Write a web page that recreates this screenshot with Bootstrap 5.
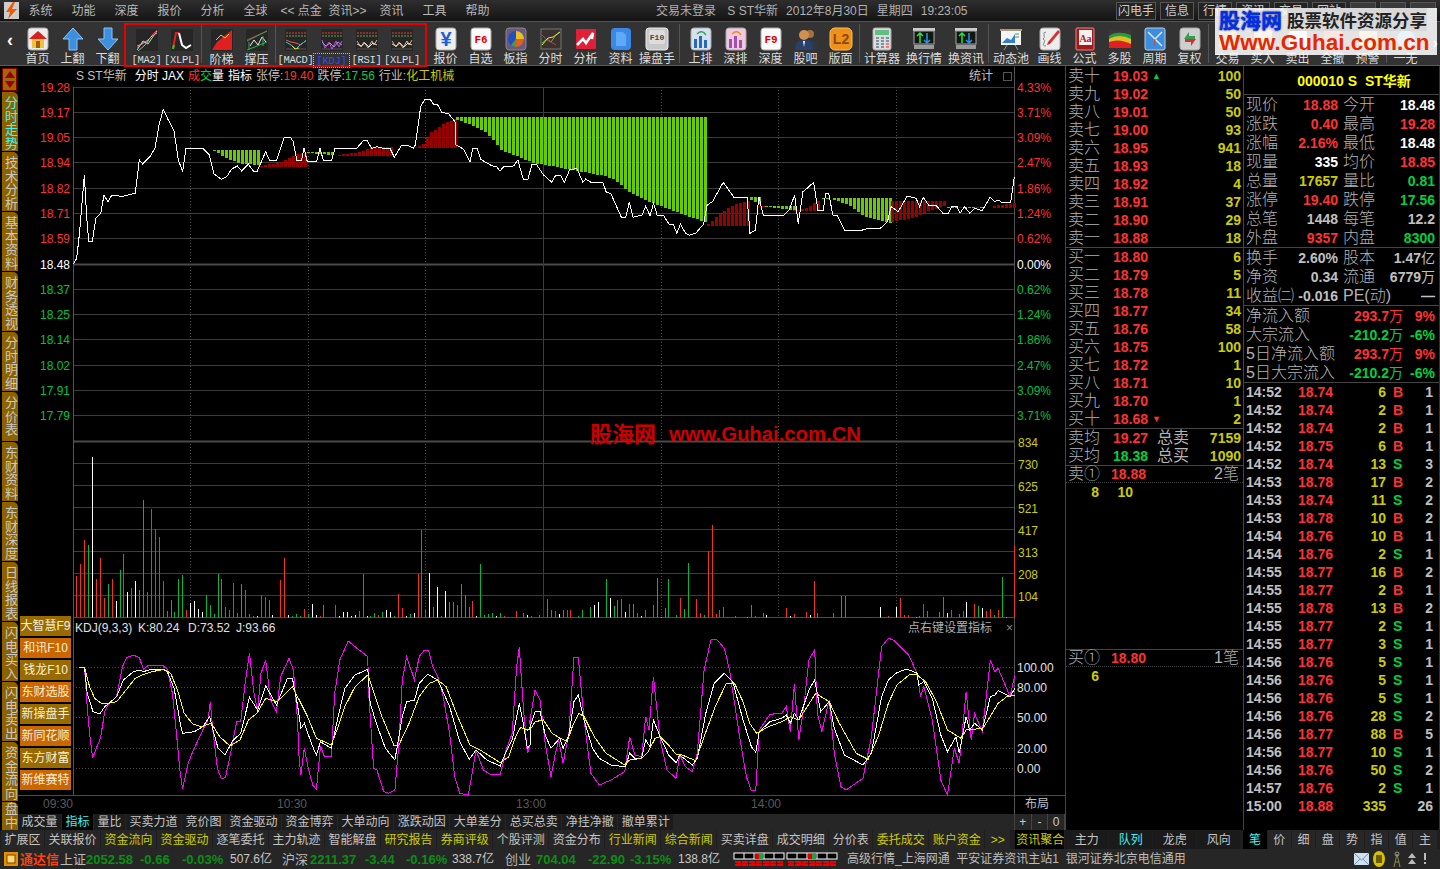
<!doctype html>
<html lang="zh">
<head>
<meta charset="utf-8">
<title>通达信</title>
<link href="https://cdn.jsdelivr.net/npm/bootstrap@5.3.0/dist/css/bootstrap.min.css" rel="stylesheet">
<style>
html,body{height:100%;margin:0;background:#000;overflow:hidden}
body{font-family:"Liberation Sans","Noto Sans CJK SC",sans-serif;font-size:12px;color:#c0c0c0;line-height:1}
.tdx-app{width:1440px;height:869px;position:relative;overflow:hidden}
.c-r{color:#ff3232}.c-g{color:#00d040}.c-y{color:#cccc00}.c-w{color:#fff}.c-c{color:#3cf5f5}.c-s{color:#c0c0c0}
.top-bar{height:21px;background:linear-gradient(#2e2e2e,#141414);color:#b8b8b8}
.top-logo{width:19px}
.top-menu{width:43px;text-align:center;flex:none}
.top-wide{width:93px}
.top-info{width:460px;margin-left:auto;flex:none;color:#b0b0b0;font-size:12px}
.top-btn{height:18px;border:1px solid #555;background:#222;color:#ccc;flex:none;margin-right:4px;width:34px;text-align:center;line-height:16px}
.top-btn.wide{width:40px}
.top-btn.win{width:26px;background:#3a3a3a}
.tool-bar{height:45px;background:#333;border-top:1px solid #555;border-bottom:1px solid #5c5c5c;padding-top:5px}
.tb-back{width:20px;color:#fff;font-size:18px;font-weight:700;text-align:center;line-height:26px;flex:none}
.tb-item{width:35px;flex:none;text-align:center;color:#ddd;white-space:nowrap}
.tb-item svg{display:block;margin:0 auto 2px;width:24px;height:24px}
.tb-item.w37{width:37px}.tb-item.w38{width:38px}.tb-item.w42{width:42px}
.tb-lab{display:block;height:13px;line-height:13px}
.tb-mono{font-family:"Liberation Mono",monospace;font-size:10.5px;color:#ddd;letter-spacing:-.3px}
.tb-blue{color:#3348ff;outline:1px dotted #bbb;padding:1px 0}
.tb-sep{width:1px;flex:none;background:#555;align-self:stretch;margin:-3px 2px 2px 2px}
.tb-sep.nar{margin:-3px 1px 2px 1px}
.tb-sep.wid{margin:-3px 3px 2px 3px}
.tb-red{border:2px solid #e60000;margin:-4px 1px 0 -1px;height:44px;padding:3px 0 0 3px;flex:none;width:303px}
.main-row{height:764px}
.side-col{width:18px;flex:none;padding-left:2px;padding-top:2px}
.side-arrow{width:15px;height:24px;background:#a06800;border:1px solid #8a0000;display:flex;flex-direction:column;align-items:center;justify-content:center;gap:3px}
.tri-u{width:0;height:0;border:5px solid transparent;border-top:0;border-bottom:7px solid #9a0000}
.tri-d{width:0;height:0;border:5px solid transparent;border-bottom:0;border-top:7px solid #9a0000}
.side-tab{width:16px;background:#8c6200;color:#c8c8c8;margin-top:1px;writing-mode:vertical-rl;text-orientation:upright;font-size:13px;letter-spacing:.5px;line-height:16px;padding-top:4px;overflow:hidden;border-top-right-radius:5px;flex:none}
.side-tab.on{color:#3cf5f5}
.h59{height:59px}.h49{height:49px}.h28{height:28px;padding-top:0}
.chart-col{width:1047px;flex:none;position:relative}
.chart-head{height:20px;padding:4px 0 0 58px;font-size:12px;white-space:nowrap}
.chart-head span{margin-right:4px}
.chart-head .first{margin-right:8px}
.chart-head .tight{margin-right:0}
.chart-head .lbl{margin-right:0}
.stat-box{display:inline-block;width:9px;height:9px;border:1px solid #555;margin:0 53px 0 10px;vertical-align:-1px}
.chart-svg{display:block;overflow:visible}
.chart-svg text{font-family:"Liberation Sans","Noto Sans CJK SC",sans-serif;font-size:12px}
.brand-stack{position:absolute;left:2px;top:550px;width:51px;display:flex;flex-direction:column;gap:2px}
.brand-btn{height:20px;background:#996a00;color:#f4f0d8;font-size:12px;text-align:center;line-height:21px;white-space:nowrap;overflow:hidden}
.brand-btn.alt{background:#cc6600}
.tabs-one{height:16px;background:#262626}
.tab-cell{padding:0 3.5px;height:16px;line-height:17px;background:#1c1c1c;color:#c4c4c4;margin-right:1px;flex:none;white-space:nowrap}
.tab-cell.act{background:#000;color:#3cf5f5}
.plus-box{margin-left:auto;display:flex;border-left:1px solid #444;width:51px}
.plus-box span{flex:1;text-align:center;line-height:16px;border-right:1px solid #444;color:#ccc}
.ob-col{width:178px;flex:none;border-left:1px solid #444;background:#000;padding-top:1px}
.ob-row{height:18px;padding-left:2px}
.ob-lab{width:45px;font-size:16px;color:#b4b4b4;flex:none;font-weight:300}
.ob-pr{font-weight:700;font-size:14px;flex:none;width:39px}
.ob-arrow{font-size:9px;width:12px;flex:none}
.ob-qty{font-weight:700;font-size:14px;color:#cccc00;margin-left:auto;padding-right:2px}
.line-h{height:1px;background:#444;flex:none}
.ob-lab2{font-size:16px;color:#b4b4b4;width:42px;flex:none;margin-left:5px}
.q-head{height:17px;border-bottom:1px dotted #444;padding-left:2px}
.q-head .ob-lab{width:43px}
.q-head .ob-pr{width:42px}
.q-nums{height:16px;padding-top:2px;font-weight:700;font-size:14px;color:#cccc00}
.q-gap{height:150px}
.q-a{width:33px;text-align:right;flex:none}
.q-b{width:34px;text-align:right;flex:none}
.if-col{width:197px;flex:none;border-left:1px solid #444;background:#000;border-right:1px solid #333;padding-top:1px}
.if-head{height:27px;line-height:29px;color:#ff0;font-weight:700;font-size:14px;text-align:center;padding-left:25px;white-space:nowrap}
.if-row{display:grid;grid-template-columns:34px 58px 5px 34px 58px;height:19px;padding-left:2px;align-items:center;white-space:nowrap}
.if-l{font-size:16px;color:#b4b4b4;font-weight:300}
.if-v{text-align:right;font-weight:700;font-size:14px}
.fl-row{display:grid;grid-template-columns:98px 59px 32px;height:19px;padding-left:2px;align-items:center;white-space:nowrap}
.fl-u{font-weight:400;font-size:14px}
.tick-row{display:grid;grid-template-columns:52px 36px 52px 7px 12px 28px;height:18px;padding-left:2px;align-items:center;font-weight:700;font-size:14px;white-space:nowrap}
.tick-n{text-align:right}
.tabs-two{height:19px;background:#1e1e1e;padding-left:1px}
.tabs-two .tab-cell{height:19px;line-height:20px;background:#262626}
.tabs-two .tab-cell.c-y{color:#cccc00}
.tabs-two .tab-cell.c-c{color:#3cf5f5}
.tabs-two .mk{width:25px;text-align:center;color:#cccc00;padding:0;background:#262626}
.tabs-two .blk{background:#000;color:#cccc00;width:49px;padding:0 0 0 1px;margin-left:4px}
.tabs-two .r4{width:43px;text-align:center;padding:0;background:#1a1a1a}
.tabs-two .r8{width:23.3px;text-align:center;padding:0;background:#262626}
.tabs-two .r8.act{background:#000}
.r-gap{width:2px;flex:none}
.status-bar{height:20px;background:#262626;display:grid;grid-template-columns:20px 40px 26px 54px 42px 48px 52px 28px 55px 41px 46px 53px 31px 52px 42px 48px 52px 112px 1fr 90px;align-items:center;white-space:nowrap}
.st-g{color:#0a8f14;font-weight:700;font-size:13px}
.st-n{color:#c8c8c8;font-size:12px}
.st-l{color:#bbb;font-size:13px}
.st-brand{color:#ff4010;font-weight:700;font-size:13px}
.st-msg{color:#bdbdbd;font-size:12px;padding-left:5px}
.logo-over{position:absolute;left:1215px;top:8px;width:222px;height:47px;background:rgba(255,255,255,.87);padding:0 2px 0 4px;overflow:hidden}
.logo-a{color:#0030e8;font-weight:700;font-size:21px;line-height:23px;font-family:"Noto Sans CJK SC",sans-serif;text-shadow:0 0 2px #000060}
.logo-b{color:#222;font-weight:700;font-size:17.5px;margin-left:5px;line-height:23px;font-family:"Noto Sans CJK SC",sans-serif;white-space:nowrap;background:#d8d8d8}
.logo-c{color:#e62800;font-weight:700;font-size:22.5px;line-height:24px;white-space:nowrap}
.next-arrow{position:absolute;left:1433px;top:36px;color:#fff;font-size:14px;font-weight:700}
</style>
</head>
<body>
<div class="tdx-app d-flex flex-column">
  <div class="top-bar d-flex align-items-center">
    <div class="top-logo ps-1 flex-none"><svg width="15" height="17" viewBox="0 0 15 17"><rect width="15" height="17" fill="#ccc"/><path d="M9 0 2 10h4l-2 7 9-10H8l3-7z" fill="#f05a00"/></svg></div>
    <span class="top-menu">系统</span><span class="top-menu">功能</span><span class="top-menu">深度</span><span class="top-menu">报价</span><span class="top-menu">分析</span><span class="top-menu">全球</span>
    <span class="top-menu top-wide">&lt;&lt; 点金&nbsp;&nbsp;资讯&gt;&gt;</span>
    <span class="top-menu">资讯</span><span class="top-menu">工具</span><span class="top-menu">帮助</span>
    <div class="top-info d-flex gap-2 justify-content-start"><span>交易未登录</span><span>&nbsp;S ST华新</span><span>2012年8月30日</span><span>星期四</span><span>19:23:05</span></div>
    <div class="d-flex flex-none" id="topBtns"><span class="top-btn wide">闪电手</span><span class="top-btn">信息</span><span class="top-btn">行情</span><span class="top-btn">资讯</span><span class="top-btn">交易</span><span class="top-btn">网站</span><span class="top-btn win"></span><span class="top-btn win"></span><span class="top-btn win"></span></div>
  </div>
  <div class="tool-bar d-flex" id="toolBar"></div>
  <div class="main-row d-flex">
    <div class="side-col d-flex flex-column" id="sideCol"></div>
    <div class="chart-col d-flex flex-column">
      <div class="chart-head d-flex">
        <span class="first c-s">S ST华新</span><span class="c-w">分时 JAX</span><span class="tight c-r">成</span><span class="tight c-g">交</span><span class="c-w">量</span><span class="c-w">指标</span>
        <span class="lbl c-s">张停:</span><span class="c-r">19.40</span><span class="lbl c-s">跌停:</span><span class="c-g">17.56</span><span class="lbl c-s">行业:</span><span class="c-y">化工机械</span>
        <span class="ms-auto tight c-s">统计<i class="stat-box"></i></span>
      </div>
      <svg class="chart-svg" id="chart" width="1047" height="728" viewBox="18 86 1047 728"></svg>
      <div class="brand-stack" id="brands"></div>
      <div class="tabs-one d-flex" id="tabsOne"></div>
    </div>
    <div class="ob-col d-flex flex-column" id="obCol"></div>
    <div class="if-col d-flex flex-column" id="ifCol"></div>
  </div>
  <div class="tabs-two d-flex" id="tabsTwo"></div>
  <div class="status-bar">
    <svg width="14" height="14" viewBox="0 0 14 14" class="ms-1"><rect width="14" height="14" fill="#e09000"/><rect x="3" y="3" width="8" height="8" fill="#f8d878" stroke="#804000"/></svg>
    <span class="st-brand">通达信</span><span class="st-l">上证</span><span class="st-g">2052.58</span><span class="st-g">-0.66</span><span class="st-g">-0.03%</span><span class="st-n">507.6亿</span>
    <span class="st-l">沪深</span><span class="st-g">2211.37</span><span class="st-g">-3.44</span><span class="st-g">-0.16%</span><span class="st-n">338.7亿</span>
    <span class="st-l">创业</span><span class="st-g">704.04</span><span class="st-g">-22.90</span><span class="st-g">-3.15%</span><span class="st-n">138.8亿</span>
    <svg width="112" height="18" viewBox="0 0 112 18" id="meter"></svg>
    <span class="st-msg">高级行情_上海网通&nbsp;&nbsp;平安证券资讯主站1&nbsp;&nbsp;银河证券北京电信通用</span>
    <svg width="90" height="18" viewBox="0 0 90 18">
      <rect x="4" y="3" width="15" height="12" fill="#cfe0f0"/><path d="M4 3l7.500 7L19 3M4 15l6-6M19 15l-6-6" stroke="#7a8ea8" fill="none"/>
      <ellipse cx="29" cy="9" rx="6" ry="8" fill="#d8c000"/><rect x="26" y="5" width="6" height="8" fill="#6a5a00"/>
      <path d="M44 17l3-13 3 13M45 12h4" stroke="#8a8a50" fill="none"/><circle cx="47" cy="4" r="2" fill="none" stroke="#999"/>
      <path d="M62 3l4 5h-8zM62 9l4 5h-8z" fill="#bbb"/><rect x="74" y="3" width="2" height="7" fill="#bbb"/><rect x="74" y="12" width="2" height="2" fill="#bbb"/>
    </svg>
  </div>
  <div class="logo-over">
    <div class="d-flex align-items-center"><span class="logo-a">股海网</span><span class="logo-b">股票软件资源分享</span></div>
    <div class="logo-c">Www.Guhai.com.cn</div>
  </div>
  <div class="next-arrow">&rsaquo;</div>
</div>
<script src="https://cdn.jsdelivr.net/npm/bootstrap@5.3.0/dist/js/bootstrap.bundle.min.js"></script>
<script>
(function(){
/* ---------- icons ---------- */
function tile(c,s){return '<rect x="2" y="1" width="20" height="22" rx="3" fill="'+c+'" stroke="'+(s||'#aaa')+'"/>';}
function dark(){return '<rect x="1" y="1" width="22" height="22" fill="#262626"/>';}
function dots(){return '<path d="M2 5h20" stroke="#d84030" stroke-dasharray="2 1"/><path d="M2 8h20" stroke="#70a040" stroke-dasharray="2 1"/><path d="M2 21h20" stroke="#555"/>';}
function t(x,y,s,c,txt,f){return '<text x="'+x+'" y="'+y+'" font-size="'+s+'" fill="'+c+'" font-weight="700" text-anchor="middle" font-family="'+(f||'Liberation Mono')+'">'+txt+'</text>';}
var I={
home:tile('#ececec')+'<path d="M12 4l9 8H3z" fill="#d82020"/><rect x="6" y="12" width="12" height="9" fill="#f0c040"/><rect x="10" y="14" width="4" height="7" fill="#a06000"/>',
up:'<path d="M12 1l10 11h-6v11H8V12H2z" fill="#3d8fe0" stroke="#8cc4f4"/>',
dn:'<path d="M12 23L2 12h6V1h8v11h6z" fill="#3d8fe0" stroke="#8cc4f4"/>',
ma:dark()+'<path d="M2 20l6-6 4 1 5-8 5-5" stroke="#e04040" fill="none"/><path d="M2 22l6-9 5 3 4-6 5-7" stroke="#8f8" fill="none"/><path d="M2 18l5-2 6-4 4-4 5-3" stroke="#c8a0d0" fill="none"/><path d="M3 23l6-5 5-6" stroke="#aaa" fill="none"/>',
xl:dark()+'<path d="M3 20L6 5l3 0" stroke="#e02020" stroke-width="2" fill="none"/><path d="M9 5l3 12 4 3 5-3" stroke="#fff" stroke-width="2" fill="none"/><path d="M3 21l1-4" stroke="#2c2" stroke-width="2"/>',
stair:dark()+'<path d="M2 22l5-8 6-5 9-7v20z" fill="#e02020"/><path d="M6 12l5-5 4 3 4-4" stroke="#eed040" fill="none"/>',
press:dark()+'<path d="M2 12l20-9" stroke="#d03030"/><path d="M2 22l20-8" stroke="#20c040"/><path d="M5 18l4-6 4 5 4-8 4 5" stroke="#eee" fill="none"/><path d="M2 13L22 3M4 22v-8M18 18V8" stroke="#40a060" fill="none"/>',
macd:dark()+dots()+'<path d="M2 14l5 3 5 4 5-5 5-3" stroke="#30d0d0" fill="none"/><path d="M2 12l5 2 5 1 5 2 5-5" stroke="#e06060" fill="none"/><path d="M8 18l3 3 4-1" stroke="#d0d040" fill="none"/>',
kdj:dark()+dots()+'<path d="M2 12l3 8 4-6 3 7 4-8 3 6 3-6" stroke="#e040e0" fill="none"/><path d="M2 14l4 4 4-3 4 4 4-5 4 3" stroke="#90a0e0" fill="none"/>',
rsi:dark()+dots()+'<path d="M2 13l4 6 3-5 4 6 4-7 2 4 3-5" stroke="#d8b080" fill="none"/><path d="M2 16l4 2 4-3 4 4 4-4 4 2" stroke="#e0e0e0" fill="none"/>',
yen:tile('#eee')+t(12,19,20,'#2060d0','¥','Liberation Sans'),
f6:tile('#fafafa')+t(12,16,11,'#e00000','F6'),
pie:tile('#6a5a80','#888')+'<circle cx="12" cy="12" r="8" fill="#2050c0"/><path d="M12 12V4a8 8 0 0 1 8 8z" fill="#e8c020"/><path d="M12 12h8a8 8 0 0 1-8 8z" fill="#e06020"/><path d="M12 12v8a8 8 0 0 1-5-2z" fill="#40a040"/>',
fen:'<rect x="2" y="2" width="20" height="20" fill="#3a3030" stroke="#777"/><path d="M3 16l5-4 4 3 5-7 4-3" stroke="#30d040" fill="none"/><path d="M3 8l5 5 4 2 5 3" stroke="#e03030" fill="none"/><path d="M3 18l6-7 5-1 7-5" stroke="#e8e040" fill="none"/>',
ana:'<rect x="2" y="2" width="20" height="20" rx="1" fill="#e02038"/><path d="M3 18l6-6 3 4 7-10-1 6" stroke="#fff" stroke-width="2.500" fill="none"/>',
doc:'<rect x="2" y="1" width="20" height="22" rx="4" fill="#3a88e8"/><path d="M7 5h7l3 3v11H7z" fill="#60a8f8"/>',
f10:'<rect x="1" y="1" width="22" height="22" rx="3" fill="#c8c8c8" stroke="#eee"/><rect x="4" y="3" width="16" height="14" rx="2" fill="#ddd"/>'+t(12,13,8,'#444','F10'),
bup:tile('#d4e2f0')+'<path d="M5 21V12h3v9zM10 21V9h3v12zM15 21V13h3v8z" fill="#2868b8"/><path d="M8 7q5-5 9 1" stroke="#40a060" stroke-width="1.500" fill="none"/>',
bdp:tile('#f0c8e0')+'<path d="M5 21V12h3v9zM10 21V9h3v12zM15 21V13h3v8z" fill="#a050b0"/><path d="M8 7q5-5 9 1" stroke="#e89020" stroke-width="1.500" fill="none"/>',
f9:tile('#fafafa')+t(12,16,11,'#e00000','F9'),
ppl:'<circle cx="16" cy="7" r="4" fill="#a87040"/><path d="M9 22c0-8 3-9 7-9s7 2 7 9z" fill="#303848"/><circle cx="10" cy="8" r="5" fill="#d09050"/><path d="M1 23c0-9 4-10 9-10s9 1 9 10z" fill="#28406a"/><path d="M9 14l1 6 1-6z" fill="#fff"/>',
l2:'<rect x="1" y="1" width="22" height="22" rx="5" fill="#f09018" stroke="#f8c060"/><text x="12" y="17" font-size="14" fill="#8a4a00" font-weight="700" text-anchor="middle" font-family="Liberation Sans">L2</text>',
calc:'<rect x="3" y="1" width="18" height="22" rx="2" fill="#dcdcdc" stroke="#aaa"/><rect x="5" y="3" width="14" height="5" fill="#60c080"/><path d="M6 11h3M11 11h3M16 11h3M6 14h3M11 14h3M16 14h3M6 17h3M11 17h3M6 20h3M11 20h3" stroke="#8090a0" stroke-width="2"/><path d="M16 17h3M16 20h3" stroke="#e08080" stroke-width="2"/>',
mon:'<rect x="1" y="1" width="22" height="3" fill="#ccc"/><rect x="2" y="4" width="20" height="13" fill="#101810" stroke="#aaa"/><path d="M8 16V6M5 9l3-3 3 3" stroke="#30e040" stroke-width="1.500" fill="none"/><path d="M15 6v10M12 13l3 3 3-3" stroke="#3090f0" stroke-width="1.500" fill="none"/><rect x="2" y="18" width="20" height="4" fill="#999"/>',
board:'<rect x="1" y="2" width="22" height="2" fill="#a89880"/><rect x="2" y="4" width="20" height="14" fill="#f4f4f4"/><path d="M3 16l5-5 4 2 4-6v9z" fill="#3080d0"/><path d="M16 7h4M16 10h4" stroke="#50a050"/><path d="M8 18l-3 5M16 18l3 5" stroke="#999"/>',
draw:tile('#ededed')+'<path d="M8 5q-3 0-2 3t-1 4q3 1 1 4t2 3" stroke="#888" fill="none"/><path d="M20 3L10 15l-1 3 3-1L22 5z" fill="#d83030"/>',
book:'<rect x="3" y="1" width="18" height="22" rx="1" fill="#a81818" stroke="#d88"/><rect x="6" y="3" width="13" height="15" fill="#f8f0f0"/><text x="12.500" y="15" font-size="10" fill="#b02020" font-weight="700" text-anchor="middle" font-family="Liberation Serif">Aa</text>',
multi:'<rect x="1" y="3" width="22" height="18" fill="#403838"/><path d="M1 9q8-6 22-1v13H1z" fill="#20a040"/><path d="M1 12q10-6 22 0v9H1z" fill="#e0c020"/><path d="M1 15q10-4 22 2v4H1z" fill="#e02020"/>',
period:'<rect x="2" y="1" width="20" height="22" rx="2" fill="#3c8ce0" stroke="#bcd"/><path d="M5 5l14 14M19 5L12 12" stroke="#d8eaff" stroke-width="1.500"/><path d="M12 12l-1 6" stroke="#d04040"/>',
fq:tile('#cfcfcf')+'<path d="M6 12l5-7v4h6v3z" fill="#30a050"/><path d="M18 12l-5 7v-4H7v-3z" fill="#d83030"/>',
bo:'<rect x="3" y="3" width="18" height="18" rx="3" fill="#e08020"/>',
bp:'<rect x="3" y="3" width="18" height="18" rx="3" fill="#e8b060"/>',
bw:'<rect x="3" y="3" width="18" height="18" rx="3" fill="#f0f0f0"/>',
br:'<rect x="3" y="3" width="18" height="18" rx="3" fill="#e04030"/>',
bt:'<rect x="3" y="3" width="18" height="18" rx="9" fill="#60a0d0"/>'
};
function item(ic,lab,opt){opt=opt||{};
 return '<div class="tb-item '+(opt.cls||'')+'"><svg viewBox="0 0 24 24">'+I[ic]+'</svg><span class="tb-lab '+(opt.mono?'tb-mono ':'')+(opt.blue?'tb-blue':'')+'">'+lab+'</span></div>';}
var sep='<div class="tb-sep"></div>',sepN='<div class="tb-sep nar"></div>',sepW='<div class="tb-sep wid"></div>';
var M={mono:true};
var h='<div class="tb-back">&lsaquo;</div>'+item('home','首页')+item('up','上翻')+item('dn','下翻');
h+='<div class="tb-red d-flex">'+item('ma','[MA2]',M)+item('xl','[XLPL]',M)+sep+item('stair','阶梯')+item('press','撑压')+sepN+item('macd','[MACD]',{mono:true,cls:'w37'})+item('kdj','[KDJ]',{mono:true,blue:true})+item('rsi','[RSI]',M)+item('rsi','[XLPL]',M)+'</div>';
h+=item('yen','报价')+item('f6','自选')+item('pie','板指')+item('fen','分时')+item('ana','分析')+item('doc','资料')+item('f10','操盘手',{cls:'w38'})+sepW;
h+=item('bup','上排')+item('bdp','深排')+item('f9','深度')+item('ppl','股吧')+item('l2','版面')+sepN;
h+=item('calc','计算器',{cls:'w42'})+item('mon','换行情',{cls:'w42'})+item('mon','换资讯',{cls:'w42'})+sepN;
h+=item('board','动态池',{cls:'w42'})+item('draw','画线')+item('book','公式')+item('multi','多股')+item('period','周期')+item('fq','复权')+sepN;
h+=item('bo','交易')+item('bp','买入')+item('bw','卖出')+item('br','全撤')+item('bp','预警')+sepN+item('bt','一无');
document.getElementById('toolBar').innerHTML=h;

/* ---------- side tabs ---------- */
var st=[['分时走势','h59 on'],['技术分析','h59'],['基本资料','h59'],['财务透视','h59'],['分时明细','h59'],['分价表','h49'],['东财资料','h59'],['东财深度','h59'],['日线报表','h59'],['闪电买入','h59'],['闪电卖出','h59'],['资金流向','h59'],['盘中','h28']];
document.getElementById('sideCol').innerHTML='<div class="side-arrow"><i class="tri-u"></i><i class="tri-d"></i></div>'+st.map(function(s){return '<div class="side-tab '+s[1]+'">'+s[0]+'</div>';}).join('');

/* ---------- brand buttons ---------- */
document.getElementById('brands').innerHTML=['大智慧F9','和讯F10','钱龙F10','东财选股','新操盘手','新同花顺','东方财富','新维赛特'].map(function(s,i){return '<div class="brand-btn'+((i%2)?' alt':'')+'">'+s+'</div>';}).join('');

/* ---------- tab rows ---------- */
var one=['成交量','指标','量比','买卖力道','竞价图','资金驱动','资金博弈','大单动向','涨跌动因','大单差分','总买总卖','净挂净撤','撤单累计'];
document.getElementById('tabsOne').innerHTML=one.map(function(s){return '<span class="tab-cell'+(s=='指标'?' act':'')+'">'+s+'</span>';}).join('')+'<div class="plus-box"><span>+</span><span>-</span><span>0</span></div>';
var two=[['扩展区'],['关联报价'],['资金流向',1],['资金驱动',1],['逐笔委托'],['主力轨迹'],['智能解盘'],['研究报告',1],['券商评级',1],['个股评测'],['资金分布'],['行业新闻',1],['综合新闻',1],['买卖详盘'],['成交明细'],['分价表'],['委托成交',1],['账户资金',1]];
h=two.map(function(s){return '<span class="tab-cell'+(s[1]?' c-y':'')+'"'+'>'+s[0]+'</span>';}).join('');
h+='<span class="tab-cell mk">&gt;&gt;</span><span class="tab-cell blk">资讯聚合</span>';
h+=['主力','队列','龙虎','风向'].map(function(s){return '<span class="tab-cell r4'+(s=='队列'?' c-c':'')+'">'+s+'</span>';}).join('');
h+='<span class="r-gap"></span>';
h+=['笔','价','细','盘','势','指','值','主'].map(function(s){return '<span class="tab-cell r8'+(s=='笔'?' act c-c':'')+'">'+s+'</span>';}).join('');
document.getElementById('tabsTwo').innerHTML=h;

/* ---------- order book ---------- */
function ob(l,p,q,a){return '<div class="ob-row d-flex align-items-center"><span class="ob-lab">'+l+'</span><span class="ob-pr c-r">'+p+'</span><span class="ob-arrow '+(a=='▲'?'c-g':'c-r')+'">'+(a||'')+'</span><span class="ob-qty">'+q+'</span></div>';}
var S=[['卖十','19.03',100,'▲'],['卖九','19.02',50],['卖八','19.01',50],['卖七','19.00',93],['卖六','18.95',941],['卖五','18.93',18],['卖四','18.92',4],['卖三','18.91',37],['卖二','18.90',29],['卖一','18.88',18]];
var B=[['买一','18.80',6],['买二','18.79',5],['买三','18.78',11],['买四','18.77',34],['买五','18.76',58],['买六','18.75',100],['买七','18.72',1],['买八','18.71',10],['买九','18.70',1],['买十','18.68',2,'▼']];
h=S.map(function(r){return ob.apply(null,r);}).join('')+'<div class="line-h"></div>';
h+=B.map(function(r){return ob.apply(null,r);}).join('')+'<div class="line-h"></div>';
function tot(a,p,c,b,q){return '<div class="ob-row d-flex align-items-center"><span class="ob-lab">'+a+'</span><span class="ob-pr '+c+'">'+p+'</span><span class="ob-lab2">'+b+'</span><span class="ob-qty">'+q+'</span></div>';}
h+=tot('卖均','19.27','c-r','总卖',7159)+tot('买均','18.38','c-g','总买',1090)+'<div class="line-h"></div>';
function qh(a,p,n){return '<div class="q-head d-flex align-items-center"><span class="ob-lab">'+a+'</span><span class="ob-pr c-r">'+p+'</span><span class="ms-auto if-l pe-1">'+n+'</span></div>';}
h+=qh('卖①','18.88','2笔')+'<div class="q-nums d-flex"><span class="q-a">8</span><span class="q-b">10</span></div><div class="q-gap"></div><div class="line-h"></div>';
h+=qh('买①','18.80','1笔')+'<div class="q-nums d-flex"><span class="q-a">6</span></div>';
document.getElementById('obCol').innerHTML=h;

/* ---------- info panel ---------- */
function ir(a,v,c,b,w,d){return '<div class="if-row"><span class="if-l">'+a+'</span><span class="if-v '+c+'">'+v+'</span><span></span><span class="if-l">'+b+'</span><span class="if-v '+d+'">'+w+'</span></div>';}
function fl(a,v,c,p){return '<div class="fl-row"><span class="if-l">'+a+'</span><span class="if-v '+c+'">'+v+'<span class="fl-u">万</span></span><span class="if-v '+c+'">'+p+'</span></div>';}
h='<div class="if-head">000010 S&nbsp;&nbsp;ST华新</div><div class="line-h"></div>';
h+=ir('现价','18.88','c-r','今开','18.48','c-w')+ir('涨跌','0.40','c-r','最高','19.28','c-r')+ir('涨幅','2.16%','c-r','最低','18.48','c-w')+ir('现量','335','c-w','均价','18.85','c-r')+ir('总量','17657','c-y','量比','0.81','c-g')+ir('涨停','19.40','c-r','跌停','17.56','c-g')+ir('总笔','1448','c-s','每笔','12.2','c-s')+ir('外盘','9357','c-r','内盘','8300','c-g');
h+='<div class="line-h"></div>'+ir('换手','2.60%','c-s','股本','1.47<span class="fl-u">亿</span>','c-s')+ir('净资','0.34','c-s','流通','6779<span class="fl-u">万</span>','c-s')+ir('收益㈡','-0.016','c-s','PE(动)','—','c-s');
h+='<div class="line-h"></div>'+fl('净流入额','293.7','c-r','9%')+fl('大宗流入','-210.2','c-g','-6%')+fl('5日净流入额','293.7','c-r','9%')+fl('5日大宗流入','-210.2','c-g','-6%');
h+='<div class="line-h"></div>';
var T=['14:52 18.74 6 B 1','14:52 18.74 2 B 1','14:52 18.74 2 B 1','14:52 18.75 6 B 1','14:52 18.74 13 S 3','14:53 18.78 17 B 2','14:53 18.74 11 S 2','14:53 18.78 10 B 2','14:54 18.76 10 B 1','14:54 18.76 2 S 1','14:55 18.77 16 B 2','14:55 18.77 2 B 1','14:55 18.78 13 B 2','14:55 18.77 2 S 1','14:55 18.77 3 S 1','14:56 18.76 5 S 1','14:56 18.76 5 S 1','14:56 18.76 5 S 1','14:56 18.76 28 S 2','14:56 18.77 88 B 5','14:56 18.77 10 S 1','14:56 18.76 50 S 2','14:57 18.76 2 S 1','15:00 18.88 335 - 26'];
h+=T.map(function(s){var a=s.split(' ');return '<div class="tick-row"><span class="c-s">'+a[0]+'</span><span class="c-r">'+a[1]+'</span><span class="tick-n c-y">'+a[2]+'</span><span></span><span class="'+(a[3]=='B'?'c-r':'c-g')+'">'+(a[3]=='-'?'':a[3])+'</span><span class="tick-n c-s">'+a[4]+'</span></div>';}).join('');
document.getElementById('ifCol').innerHTML=h;

/* ---------- chart ---------- */
var svg='';
var GRID='#3c3c3c';
function hl(y,c,w,d,x0,x1){svg+='<line x1="'+(x0||73)+'" x2="'+(x1||1015)+'" y1="'+y+'" y2="'+y+'" stroke="'+(c||GRID)+'" stroke-width="'+(w||1)+'"'+(d?' stroke-dasharray="1 2"':'')+'/>';}
function vl(x,y0,y1,c,d){svg+='<line x1="'+x+'" x2="'+x+'" y1="'+y0+'" y2="'+y1+'" stroke="'+(c||GRID)+'"'+(d?' stroke-dasharray="1 2"':'')+'/>';}
function tx(x,y,s,c,a){svg+='<text x="'+x+'" y="'+y+'" fill="'+c+'" text-anchor="'+(a||'start')+'" dominant-baseline="central">'+s+'</text>';}
var PY=[87.5,112.5,137.5,162.5,188.5,213.5,238.5,264.5,289.5,314.5,339.5,365.5,390.5,415.5];
var PL=['19.28','19.17','19.05','18.94','18.82','18.71','18.59','18.48','18.37','18.25','18.14','18.02','17.91','17.79'];
var PR=['4.33%','3.71%','3.09%','2.47%','1.86%','1.24%','0.62%','0.00%','0.62%','1.24%','1.86%','2.47%','3.09%','3.71%'];
PY.forEach(function(y,i){if(i==7)hl(y,'#4a4a4a',2);else hl(y);var c=i<7?'#ff3232':i==7?'#fff':'#00c040';tx(70,y+.5,PL[i],c,'end');tx(1017,y+.5,PR[i],c);});
var VY=[441.5,463.5,485.5,507.5,529.5,551.5,573.5,595.5];
var VL=['834','730','625','521','417','313','208','104'];
VY.forEach(function(y,i){hl(y,i?GRID:'#4a4a4a',i?1:2);tx(1018,y+1,VL[i],'#cccc00');});
hl(617.5,'#4a4a4a');
[[667.5,'100.00'],[687.5,'80.00'],[717.5,'50.00'],[748.5,'20.00'],[768.5,'0.00']].forEach(function(a){hl(a[0],'#4a4a4a',1,1);tx(1017,a[0],a[1],'#e0e0e0');});
hl(795.5,'#4a4a4a',1,0,18,1065);
[190.5,308.5,425.5,661.5,778.5,896.5].forEach(function(x){vl(x,87,617,'#4a4a4a',1);});
vl(543.5,87,617,GRID);
vl(73.5,87,796,'#555');vl(1014.5,67,814,'#555');

/* bars */
function interp(p,x){for(var i=0;i<p.length-1;i++){if(x<=p[i+1][0]){var a=p[i],b=p[i+1];return a[1]+(b[1]-a[1])*(x-a[0])/(b[0]-a[0]);}}return p[p.length-1][1];}
function cluster(x0,x1,top,bot,c){for(var x=x0;x<=x1;x+=4){var yt=Math.round(interp(top,x)),yb=Math.round(interp(bot,x));if(yb<=yt)yb=yt+1;svg+='<rect x="'+x+'" y="'+yt+'" width="3" height="'+(yb-yt)+'" fill="'+c+'"/>';}}
var GR='#66cc00',RD='#990000';
function flat(v){return [[0,v],[2000,v]];}
cluster(213,259,flat(150),[[213,151],[225,158],[240,164],[259,165]],GR);
cluster(260,306,[[260,166],[280,162],[295,154],[306,153]],flat(167),RD);
cluster(307,333,flat(152),[[307,153],[333,155]],GR);
cluster(338,392,[[338,155],[360,152],[370,147],[392,147]],flat(156),RD);
cluster(410,455,[[410,147],[420,146],[425,140],[430,132],[436,129],[445,122],[455,119]],flat(148),RD);
cluster(456,706,flat(117),[[456,120],[470,125],[485,132],[500,150],[518,157],[532,163],[550,166],[571,170],[603,176],[614,180],[625,190],[643,200],[657,205],[678,213],[706,223]],GR);
cluster(707,749,[[707,224],[715,217],[725,209],[735,204],[749,200]],flat(226),RD);
cluster(750,758,flat(197),[[750,200],[758,204]],GR);
cluster(758,762,flat(206),flat(207),RD);
cluster(765,793,flat(206),[[765,207],[793,210]],GR);
cluster(793,818,[[793,210],[803,209],[810,205],[818,200]],flat(211),RD);
cluster(822,826,flat(198),flat(199),GR);
cluster(833,890,flat(198),[[833,200],[850,206],[862,216],[875,220],[890,223]],GR);
cluster(891,945,flat(201),[[891,222],[915,217],[925,212],[945,205]],RD);
[947,951,955,959,964,968,972,976,980].forEach(function(x,i){svg+='<rect x="'+x+'" y="207" width="3" height="1" fill="'+(i%4==3?RD:GR)+'"/>';});
cluster(993,1013,[[993,206],[1013,203]],flat(208),RD);

/* volume bars */
var COL={r:'#ee3322',g:'#00b840',w:'#ffffff'};
var V8='r226,408 r238,372 r250,300 g262,316 w273,52 r285,418 r297,354 r309,474 g321,432 r333,418 w345,484 g356,390 r365,342 w378,456 r390,444 w401,423 r412,450 g424,180 r437,456 r448,207 r460,267 r471,291 r483,423 g495,514 g507,480 g516,516 g528,417 g540,405 r551,510 w563,489 w575,483 w587,507 w599,516 g611,465 g622,495 g634,522 g646,402 g655,417 r667,501 r678,510 r690,429 r702,519 g714,432 r726,450 r738,522 g750,528 w761,528 r773,465 r785,471 g797,480 w807,525 r829,420 r841,354 w853,525 g865,528 g877,522 g889,528 r900,507 g912,522 w924,492 w936,525 r948,528 g957,495 r993,495 w1005,528 w1016,516 w1028,516 w1040,528 w1052,525 r1063,513 r1075,402 w1088,528 g1096,528 g1107,519 r1119,525 g1131,516 w1143,510 w1155,516 g1167,528 r1178,462 r1190,504 w1202,528 g1214,522 w1226,519 r1238,402 r1247,270 r1258,510 w1270,399 g1282,501 w1294,441 g1306,528 w1318,453 g1329,486 g1341,486 g1353,495 g1365,432 g1376,465 g1388,501 r1398,483 w1410,528 g1421,372 g1433,525 g1445,522 g1457,519 w1469,528 g1481,519 r1492,528 r1504,531 r1528,513 g1549,519 w1561,525';
var V9='r5,588 g28,585 g52,537 g64,570 r75,573 w87,582 g99,570 r111,570 r120,570 g143,588 g155,570 r167,590 g179,561 w190,555 w202,546 g226,477 w238,534 g250,558 g259,540 g270,537 w282,576 r294,552 g306,552 r318,579 w329,588 r341,570 g353,591 r365,555 g377,474 w389,590 g401,564 g410,477 g433,585 r445,534 g457,567 g468,429 r492,537 r504,579 g516,585 r528,393 r540,315 r552,582 r561,570 r572,561 g585,590 g597,591 g607,589 w644,590 g656,555 r668,588 r678,590 g690,579 w699,585 r758,564 w770,588 r782,582 r806,590 r818,576 w829,585 r841,483 g850,579 r874,590 g898,579 g922,528 g934,528 r993,590 w1036,561 r1048,591 r1060,588 w1084,561 r1096,534 r1108,585 r1120,585 g1132,590 w1143,590 g1153,588 r1165,552 g1176,573 g1212,576 g1223,531 w1235,579 r1247,570 g1271,582 r1283,573 w1291,546 r1315,552 g1327,558 w1339,564 r1351,573 r1362,567 g1375,585 r1387,570 g1398,471 w1410,590 r1434,378';
function vols(str,ox,oy){str.split(' ').forEach(function(e){var c=e[0],p=e.slice(1).split(','),x=Math.floor(ox+(+p[0])/2.958)+.5,y=oy+(+p[1])/3;vl(x,Math.round(y),617.5,COL[c]);});}
vols(V8,0,440);vols(V9,530,420);

/* lines */
function conv(arr,ox,oy,sx){var o=[];for(var i=0;i<arr.length;i+=2){o.push((ox+arr[i]/sx).toFixed(1)+','+(oy+arr[i+1]/3).toFixed(1));}return o;}
function poly(p,c){svg+='<polyline points="'+p.join(' ')+'" fill="none" stroke="'+c+'" stroke-width="1" shape-rendering="crispEdges"/>';}
var W6=[220,582,230,565,238,495,246,400,253,315,260,440,266,513,277,513,288,445,302,430,312,375,324,395,336,375,352,375,362,380,385,375,406,370,418,270,428,282,450,260,465,235,477,165,490,118,505,150,522,182,535,270,548,305,558,235,608,235,628,255,642,312,664,328,680,320,695,297,712,288,725,303,745,282,760,303,772,303,797,245,808,270,830,270,852,203,872,203,880,215,890,270,905,270,912,235,922,275,950,275,960,235,970,270,995,270,1005,235,1070,235,1090,212,1102,212,1115,235,1130,230,1150,235,1170,235,1183,262,1205,225,1222,225,1240,235,1246,225,1262,110,1275,87,1290,87,1300,102,1312,102,1325,128,1345,130,1365,155,1368,225,1390,237,1410,275,1418,235,1432,235,1442,268,1475,287,1490,290,1500,303];
var W7=[10,290,38,288,50,270,65,327,78,327,90,282,103,285,122,315,145,337,155,317,170,317,180,337,195,300,215,295,232,337,240,327,255,337,288,337,298,368,310,370,340,442,352,442,362,397,373,442,398,435,408,408,420,437,430,400,440,435,458,437,473,462,485,463,495,490,505,463,520,490,530,496,548,490,570,462,580,405,595,395,625,337,655,382,692,382,700,490,715,480,725,380,737,435,795,435,810,420,825,375,835,462,848,365,860,355,878,337,885,385,890,420,905,420,912,370,920,370,932,435,945,437,965,480,1015,480,1030,475,1065,475,1085,455,1095,410,1115,425,1140,378,1165,385,1175,410,1185,382,1200,405,1220,405,1240,430,1255,430,1265,410,1280,410,1288,430,1300,410,1316,430,1330,415,1350,422,1372,382,1385,395,1395,390,1405,397,1430,397,1440,320];
poly(conv(W6,0,70,3).concat(conv(W7,500,70,2.8)),'#ffffff');

var M8=[235,682,250,682,258,800,265,880,274,955,285,925,297,895,310,815,322,790,345,770,362,680,375,652,395,646,412,652,424,688,440,675,480,675,495,688,510,760,520,860,532,990,540,1048,555,975,570,935,600,870,615,840,622,786,630,875,643,985,655,1017,667,1012,680,950,700,845,712,845,725,730,738,638,750,750,762,812,772,700,786,660,800,780,818,815,830,710,855,655,868,690,880,840,885,960,890,1005,900,925,912,985,925,1035,936,1048,948,918,960,950,980,950,990,760,1005,660,1030,603,1050,620,1088,650,1090,750,1105,985,1115,990,1135,1055,1150,1060,1168,1050,1180,910,1190,720,1203,650,1226,720,1240,650,1255,630,1268,633,1280,680,1295,710,1310,765,1330,880,1345,1010,1360,1060,1385,1065,1395,1010,1408,930,1430,990,1450,1003,1480,1003,1497,930,1515,880,1528,680,1536,622,1548,800,1560,940,1568,915];
var M9=[0,900,15,810,30,840,45,970,62,1070,75,1000,85,960,98,1030,115,940,130,712,143,712,160,900,180,1060,205,1095,240,1080,280,1055,295,950,310,1005,330,1010,342,890,352,930,365,770,385,960,405,1050,432,1075,443,1005,460,1040,480,1055,495,1000,515,750,535,660,552,658,575,685,590,750,620,950,640,1070,655,1112,668,1110,678,930,710,883,745,880,758,860,770,935,782,793,795,960,810,860,825,720,842,690,850,880,863,935,885,840,900,1000,920,1100,935,1110,985,1075,1010,950,1040,680,1060,655,1075,660,1120,705,1145,760,1155,830,1165,800,1190,900,1215,1080,1235,1125,1255,985,1270,1030,1290,815,1305,960,1315,880,1338,935,1362,720,1375,755,1385,745,1420,830,1434,765];
var Wh8=[235,682,250,682,258,760,275,815,295,822,310,800,322,790,345,770,365,720,395,695,412,690,424,695,450,687,480,687,495,695,515,745,535,860,540,880,575,875,600,860,620,830,630,870,645,925,665,945,690,900,712,880,738,772,762,810,786,738,818,795,850,715,865,715,880,795,890,865,900,850,925,920,936,945,948,905,980,925,1000,830,1020,745,1050,705,1088,688,1095,790,1115,855,1140,925,1168,960,1190,830,1203,785,1226,780,1240,730,1265,703,1295,720,1330,800,1360,905,1388,958,1408,930,1440,960,1480,978,1497,935,1515,900,1536,790,1548,850,1560,925,1568,915];
var Wh9=[0,920,15,875,30,875,45,945,62,985,88,955,98,985,115,945,130,845,143,825,160,900,185,985,205,1015,240,1035,282,1040,295,1000,310,1015,330,1015,342,960,355,980,365,900,385,950,410,1005,432,1028,443,1005,480,1035,495,1015,520,880,545,790,575,760,600,785,630,900,655,980,668,997,678,935,710,905,745,895,758,885,770,910,782,880,795,900,825,810,842,780,860,875,885,845,900,925,930,1005,985,1035,1010,1000,1040,830,1060,780,1085,758,1115,747,1145,760,1150,795,1165,785,1190,835,1215,945,1235,995,1260,950,1270,1000,1290,890,1300,930,1315,910,1338,930,1362,830,1375,825,1385,812,1420,830,1434,805];
var Y8=[235,682,250,682,265,740,280,775,300,790,320,790,345,785,365,760,400,715,420,705,450,695,485,688,505,700,525,750,545,820,570,852,595,860,625,850,650,890,680,918,710,900,735,840,760,820,786,775,820,785,865,740,890,790,910,830,936,895,980,915,1000,860,1020,800,1050,740,1088,705,1100,740,1130,830,1165,915,1180,915,1210,850,1240,770,1270,730,1295,720,1320,740,1350,820,1390,915,1420,930,1480,968,1505,950,1525,890,1540,862,1560,870,1568,865];
var Y9=[0,930,15,905,40,900,65,940,90,955,110,965,125,920,145,880,160,890,190,950,225,1000,280,1035,295,1020,330,1015,350,995,370,955,385,950,410,975,432,1003,445,1003,490,1022,515,950,550,855,580,792,605,790,630,845,650,910,670,940,705,920,745,905,770,890,795,900,820,860,845,820,885,845,915,910,965,1000,1000,1018,1030,950,1060,850,1085,795,1125,762,1145,765,1170,785,1200,840,1235,930,1275,955,1290,930,1340,925,1385,850,1410,830,1434,825];
poly(conv(M8,0,440,2.958).concat(conv(M9,530,420,2.958)),'#ff00ff');
poly(conv(Wh8,0,440,2.958).concat(conv(Wh9,530,420,2.958)),'#ffffff');
poly(conv(Y8,0,440,2.958).concat(conv(Y9,530,420,2.958)),'#ffff00');

/* texts on the chart */
tx(75,628,'KDJ(9,3,3)','#e0e0e0');tx(138,628,'K:80.24','#e0e0e0');tx(188,628,'D:73.52','#e0e0e0');tx(236,628,'J:93.66','#e0e0e0');
tx(908,628,'点右键设置指标','#b0b0b0');tx(1006,628,'×','#888');
tx(58,804,'09:30','#5a5a5a','middle');tx(292,804,'10:30','#5a5a5a','middle');tx(531,804,'13:00','#5a5a5a','middle');tx(766,804,'14:00','#5a5a5a','middle');
tx(1037,804,'布局','#c0c0c0','middle');
svg+='<text x="590" y="442" fill="#cc0000" font-weight="700" style="font-size:22px">股海网</text>';
svg+='<text x="669" y="441" fill="#cc0000" font-weight="700" style="font-size:20.300px">www.Guhai.com.CN</text>';
document.getElementById('chart').innerHTML=svg;

/* meter */
var m='';[4,57].forEach(function(o){m+='<rect x="'+o+'" y="3" width="50" height="6" fill="#000" stroke="#fff"/>';for(var i=1;i<5;i++)m+='<line x1="'+(o+i*10)+'" x2="'+(o+i*10)+'" y1="3" y2="9" stroke="#fff"/>';m+='<rect x="'+(o+21)+'" y="4" width="4" height="5" fill="#e00000"/><rect x="'+(o+25)+'" y="4" width="4" height="5" fill="#20a040"/>';for(var j=0;j<7;j++){m+='<rect x="'+(o+1+j*7)+'" y="11" width="6" height="2" fill="#f00000"/><rect x="'+(o+1+j*7)+'" y="14" width="6" height="2" fill="#f00000"/>';}});
document.getElementById('meter').innerHTML=m;
})();
</script>
</body>
</html>
